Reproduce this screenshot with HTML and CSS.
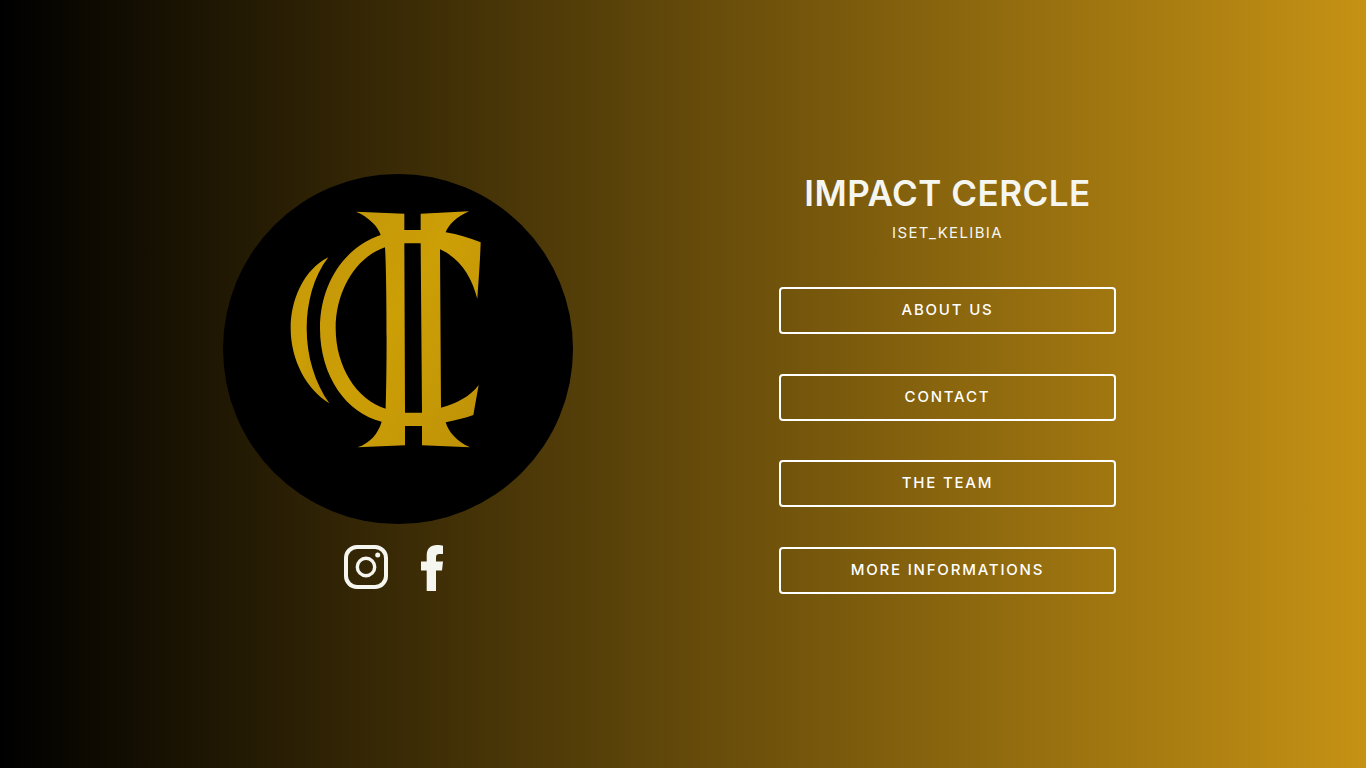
FILE: index.html
```html
<!DOCTYPE html>
<html lang="en">
<head>
    <meta charset="UTF-8">
    <meta name="viewport" content="width=device-width, initial-scale=1.0">
    <title>Impact Cercle</title>
    <link rel="stylesheet" href="styles.css">
</head>
<body>

    <main class="page">
        <section class="brand">
            <svg class="logo" viewBox="-141 -48 1050 1050" aria-label="Impact Cercle logo">
                <defs>
                    <linearGradient id="gold" x1="0" y1="0" x2="1" y2="1">
                        <stop offset="0" stop-color="#c2950a"/>
                        <stop offset="0.45" stop-color="#cc9f06"/>
                        <stop offset="1" stop-color="#bf9208"/>
                    </linearGradient>
                </defs>
                <circle cx="384" cy="477" r="525" fill="#000"/>
                <path fill="url(#gold)" d="M175 202 C100 240 62 330 62 415 C62 510 110 600 178 640 C135 580 110 500 110 415 C110 340 130 260 175 202 Z"/>
                <path fill="url(#gold)" fill-rule="evenodd" d="M258 65 L403 71 L403 120 L452 120 L452 71 L597 64 C560 80 535 105 527 127 C565 133 600 145 632 157 C630 220 625 280 622 327 C605 260 570 205 510 178 L513 653 C560 640 600 620 626 585 L610 675 C585 685 555 690 527 697 C535 725 560 755 600 772 L456 766 L456 708 L405 708 L405 766 L262 772 C300 760 325 730 335 695 C230 670 150 560 150 415 C150 280 225 170 332 135 C325 110 295 80 258 65 Z M345 172 C260 200 197 300 197 415 C197 530 260 630 347 656 C351 560 351 270 345 172 Z M403 160 L452 160 L456 668 L405 668 Z"/>
            </svg>
            <div class="social">
                <a href="#" aria-label="Instagram">
                    <svg class="icon-insta" viewBox="0 0 44 44">
                        <rect x="2" y="2" width="40" height="40" rx="11" fill="none" stroke="#f6f6f1" stroke-width="4"/>
                        <circle cx="22" cy="22" r="8.7" fill="none" stroke="#f6f6f1" stroke-width="3.4"/>
                        <circle cx="33.7" cy="10" r="2.5" fill="#f6f6f1"/>
                    </svg>
                </a>
                <a href="#" aria-label="Facebook">
                    <svg class="icon-fb" viewBox="0 0 22 46">
                        <path fill="#f6f6f1" d="M15 46 V25.5 H21 L22 16.5 H15 V12.5 C15 10 16 9 18.5 9 H22 V0.7 C21 .3 18.5 0 16 0 C9.5 0 5.7 3.5 5.7 10.5 V16.5 H0 V25.5 H5.7 V46 Z"/>
                    </svg>
                </a>
            </div>
        </section>

        <section class="links">
            <h1>IMPACT CERCLE</h1>
            <p class="sub">ISET_KELIBIA</p>
            <a class="btn" href="#">ABOUT US</a>
            <a class="btn" href="#">CONTACT</a>
            <a class="btn" href="#">THE TEAM</a>
            <a class="btn" href="#">MORE INFORMATIONS</a>
        </section>
    </main>

</body>
</html>
```

FILE: styles.css
```css
html, body {
    margin: 0;
    height: 100%;
}
body {
    font-family: Inter, "Open Sans", sans-serif;
    color: #f6f6f1;
    background: linear-gradient(90deg, #000 0%, #c69214 100%);
    overflow: hidden;
}
.page {
    display: flex;
    gap: 206px;
    padding: 174px 0 0 223px;
}
.brand {
    width: 350px;
    display: flex;
    flex-direction: column;
    align-items: center;
}
.logo {
    width: 350px;
    height: 350px;
    display: block;
}
.social {
    display: flex;
    align-items: flex-start;
    gap: 33px;
    margin-top: 21px;
    margin-right: 9px;
}
.social a {
    display: block;
}
.social svg {
    display: block;
}
.icon-insta {
    width: 44px;
    height: 44px;
}
.icon-fb {
    width: 22px;
    height: 46px;
}
.links {
    width: 337px;
    display: flex;
    flex-direction: column;
    align-items: center;
}
h1 {
    margin: 0;
    font-size: 35px;
    line-height: 38px;
    font-weight: 600;
    letter-spacing: 0.5px;
}
.sub {
    margin: 11px 0 44px;
    font-size: 15px;
    line-height: 20px;
    letter-spacing: 1.35px;
}
.btn {
    box-sizing: border-box;
    width: 100%;
    height: 47px;
    margin-bottom: 39.67px;
    padding-bottom: 2px;
    display: flex;
    align-items: center;
    justify-content: center;
    border: 2px solid #fff;
    border-radius: 4px;
    color: #fff;
    font-size: 15px;
    font-weight: 500;
    letter-spacing: 1.8px;
    text-decoration: none;
}
```
